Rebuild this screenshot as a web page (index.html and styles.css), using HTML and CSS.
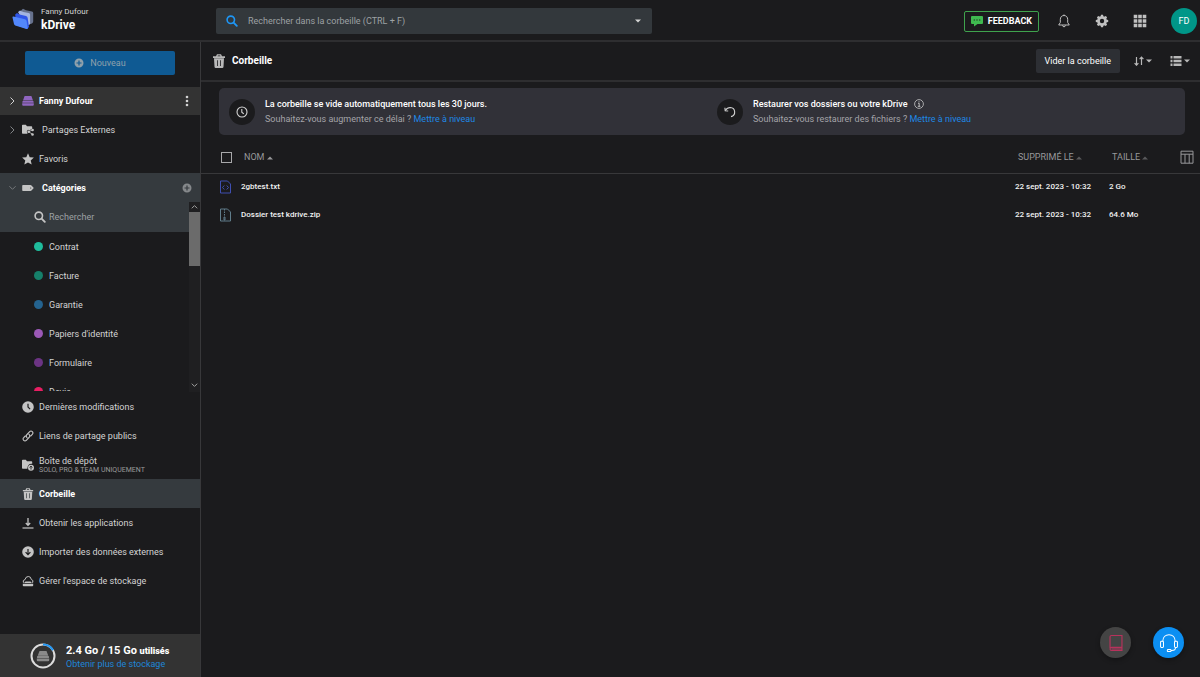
FILE: index.html
```
<!DOCTYPE html>
<html lang="fr">
<head>
<meta charset="utf-8">
<title>kDrive – Corbeille</title>
<link rel="stylesheet" href="styles.css">
</head>
<body>
<svg class="defs" width="0" height="0" aria-hidden="true">
  <symbol id="trash" viewBox="0 0 12 14"><path fill="currentColor" fill-rule="evenodd" d="M4 .3h4l1 1.900h3v1.700H0V2.200h3zM4.900 1.400l-.4.800h3l-.4-.8zM1 4.300h10l-.5 8.500q-.1 1.200-1.200 1.200H2.700q-1.100 0-1.200-1.200zM4 6.200v5.800h.8V6.200zm3.200 0v5.800h.8V6.200z"/></symbol>
  <symbol id="search" viewBox="0 0 12 12"><circle cx="4.800" cy="4.800" r="3.700" fill="none" stroke="currentColor" stroke-width="1.600"/><path d="m7.600 7.600 3.200 3.200" stroke="currentColor" stroke-width="1.900" stroke-linecap="round"/></symbol>
  <symbol id="plus" viewBox="0 0 10 10"><path fill="currentColor" fill-rule="evenodd" d="M5 .5a4.500 4.500 0 1 1 0 9 4.500 4.500 0 0 1 0-9zM4.400 2.500v1.900H2.500v1.200h1.900v1.900h1.200V5.600h1.900V4.400H5.600V2.500z"/></symbol>
  <symbol id="caret" viewBox="0 0 6 4"><path fill="currentColor" d="M0 .5h6L3 3.500z"/></symbol>
  <symbol id="drive" viewBox="0 0 12 10"><path fill="currentColor" d="M2.600 0h6.800l1.600 4.500H1zM.6 4.900h10.800l.3 1.900H.3zM.2 7.200h11.600v1.600q0 1-1 1H1.200q-1 0-1-1z"/></symbol>
  <symbol id="clock" viewBox="0 0 14 14"><circle cx="7" cy="7" r="5" fill="none" stroke="currentColor" stroke-width="1.100"/><path d="M6.800 4v3.200l2 1.700" fill="none" stroke="currentColor" stroke-width="1.100"/></symbol>
</svg>

<header class="topbar">
  <div class="brand">
    <svg class="logo" viewBox="0 0 22 22"><path fill="#66718c" d="M9 2.500 11 .8l3 1.500 6 1.300q1.200.3 1.200 1.500v8.500q0 1.200-1.200 1.800L15 17z"/><path fill="#a3b4e0" d="M6 4 8 2.600l3.300 1.300 5.500 1q1.300.3 1.300 1.600V16L14 19z"/><path fill="#2f55e8" d="M3.200 6.500 5 5l2.500 1.500L14 8q1.500.4 1.700 2L17 19l-2 2L4 17z"/><path fill="#5287fb" d="M1.500 8.500q-1.200-.2-1 1L2 16q.2 1 1.200 1.400L14.500 21q1.500.4 1.300-1l-1.200-7q-.2-1.300-1.600-1.700z"/></svg>
    <div class="brand-text"><span class="brand-user">Fanny Dufour</span><span class="brand-name">kDrive</span></div>
  </div>
  <form class="search" role="search">
    <svg class="i12 blue"><use href="#search"/></svg>
    <input class="search-input" type="search" aria-label="Rechercher dans la corbeille" placeholder="Rechercher dans la corbeille (CTRL + F)">
    <button class="plain" type="button" aria-label="Filtres de recherche"><svg class="caret"><use href="#caret"/></svg></button>
  </form>
  <div class="actions">
    <button class="feedback" type="button"><svg class="i12" viewBox="0 0 12 12"><path fill="#3fb950" d="M1 1h10q1 0 1 1v6q0 1-1 1H6.500L3 11.500V9H1Q0 9 0 8V2q0-1 1-1z"/><path fill="#1b1b1d" d="M2.700 4.500h1.200v1.100H2.700zm2.700 0h1.200v1.100H5.400zm2.700 0h1.200v1.100H8.100z"/></svg>FEEDBACK</button>
    <button class="plain" type="button" aria-label="Notifications"><svg class="i14" viewBox="0 0 14 14" fill="none" stroke="currentColor"><path d="M7 .5v1M7 1.500c2.300 0 3.700 1.700 3.700 4v3l1.600 2.500H1.700L3.300 8.500v-3c0-2.300 1.400-4 3.700-4zM5.500 11.300q.2 1.500 1.500 1.500t1.500-1.500"/></svg></button>
    <button class="plain" type="button" aria-label="Paramètres"><svg class="i14" viewBox="0 0 14 14"><g fill="currentColor"><path id="tooth" d="M5.400 3 6 .8h2L8.600 3v8L8 13.200H6L5.400 11z"/><use href="#tooth" transform="rotate(45 7 7)"/><use href="#tooth" transform="rotate(90 7 7)"/><use href="#tooth" transform="rotate(135 7 7)"/><circle cx="7" cy="7" r="4.800"/></g><circle cx="7" cy="7" r="2.200" fill="#1b1b1d"/></svg></button>
    <button class="plain" type="button" aria-label="Applications"><svg class="i14" viewBox="0 0 14 14"><path fill="currentColor" d="M.7.7h3.600v3.600H.7zm4.500 0h3.600v3.600H5.200zm4.500 0h3.600v3.600H9.700zM.7 5.200h3.600v3.600H.7zm4.500 0h3.600v3.600H5.200zm4.500 0h3.600v3.600H9.700zM.7 9.700h3.600v3.600H.7zm4.500 0h3.600v3.600H5.200zm4.500 0h3.600v3.600H9.700z"/></svg></button>
    <button class="avatar" type="button">FD</button>
  </div>
</header>

<div class="layout">
  <aside class="sidebar">
    <button class="new" type="button"><svg class="i10"><use href="#plus"/></svg>Nouveau</button>
    <nav class="nav">
      <div class="row drive">
        <svg class="chev" viewBox="0 0 6 8"><path d="m1 .5 3.500 3.500L1 7.500"/></svg>
        <svg class="i12 purple"><use href="#drive"/></svg>
        <a class="link strong" href="#">Fanny Dufour</a>
        <button class="plain end" type="button" aria-label="Options"><svg class="dots" viewBox="0 0 4 12" fill="currentColor"><circle cx="2" cy="2" r="1.300"/><circle cx="2" cy="6" r="1.300"/><circle cx="2" cy="10" r="1.300"/></svg></button>
      </div>
      <div class="row">
        <svg class="chev dim" viewBox="0 0 6 8"><path d="m1 .5 3.500 3.500L1 7.500"/></svg>
        <svg class="i12" viewBox="0 0 12 12"><path fill="currentColor" d="M0 1.500Q0 .8.800.8h3l1.200 1.500h4.400q.8 0 .8.700v1.800L7.500 6.300 6 5.800 4.800 7.200 5.500 9.800H.8Q0 9.800 0 9z"/><path d="m10.500 6-4 1.700 4 2.500" fill="none" stroke="currentColor" stroke-width=".8"/><g fill="currentColor"><circle cx="10.600" cy="6" r="1.300"/><circle cx="6.700" cy="7.800" r="1.300"/><circle cx="10.500" cy="10.500" r="1.300"/></g></svg>
        <a class="link indent" href="#">Partages Externes</a>
      </div>
      <div class="row">
        <span class="chev"></span>
        <svg class="i12" viewBox="0 0 12 12"><path fill="currentColor" d="m6 .3 1.700 3.900 4.200.4-3.200 2.800 1 4.200L6 9.400l-3.700 2.200 1-4.200L.1 4.600l4.200-.4z"/></svg>
        <a class="link" href="#">Favoris</a>
      </div>
      <div class="row on">
        <svg class="chev dim" viewBox="0 0 8 6"><path d="M.5 1 4 4.500 7.500 1"/></svg>
        <svg class="i12 white" viewBox="0 0 12 12"><path fill="currentColor" fill-rule="evenodd" d="M1 3h7.500q.6 0 1 .4L11.800 6 9.500 8.600q-.4.400-1 .4H1Q.2 9 .2 8.200V3.800Q.2 3 1 3zm7.700 2.400a.6.600 0 1 0 0 1.200.6.600 0 0 0 0-1.200z"/></svg>
        <a class="link indent strong" href="#">Catégories</a>
        <button class="plain end muted" type="button" aria-label="Ajouter une catégorie"><svg class="i10"><use href="#plus"/></svg></button>
      </div>
      <div class="scroller">
        <div class="categories">
          <label class="category finder"><svg class="i12"><use href="#search"/></svg><input class="finder-input" type="text" placeholder="Rechercher"></label>
          <a class="category" href="#"><span class="dot teal"></span>Contrat</a>
          <a class="category" href="#"><span class="dot green"></span>Facture</a>
          <a class="category" href="#"><span class="dot navy"></span>Garantie</a>
          <a class="category" href="#"><span class="dot violet"></span>Papiers d'identité</a>
          <a class="category" href="#"><span class="dot plum"></span>Formulaire</a>
          <a class="category" href="#"><span class="dot pink"></span>Devis</a>
        </div>
        <div class="track" aria-hidden="true">
          <svg class="arrow" viewBox="0 0 11 10"><path d="M2.800 6.300 5.500 3.600l2.700 2.700"/></svg>
          <span class="thumb"></span>
          <svg class="arrow last" viewBox="0 0 11 10"><path d="m2.800 3.700 2.700 2.700 2.700-2.700"/></svg>
        </div>
      </div>
      <div class="row">
        <span class="chev"></span>
        <svg class="i12" viewBox="0 0 12 12"><path fill="currentColor" fill-rule="evenodd" d="M6 .2a5.800 5.800 0 1 1 0 11.600A5.800 5.800 0 0 1 6 .2zM5.400 2.800v3.500l2.300 2.200.8-.8-1.900-1.900v-3z"/></svg>
        <a class="link" href="#">Dernières modifications</a>
      </div>
      <div class="row">
        <span class="chev"></span>
        <svg class="i12" viewBox="0 0 12 12" fill="none" stroke="currentColor" stroke-width="1.100" stroke-linecap="round"><path d="M5 7.600q-1.500-1.600 0-3.100l2.700-2.800q1.300-1.300 2.600 0t0 2.600L8.700 6M7 4.400q1.500 1.600 0 3.100l-2.700 2.800q-1.300 1.300-2.600 0t0-2.600L3.300 6"/></svg>
        <a class="link" href="#">Liens de partage publics</a>
      </div>
      <div class="row">
        <span class="chev"></span>
        <svg class="i12" viewBox="0 0 12 12"><path fill="currentColor" d="M0 1.500Q0 .8.800.8h3l1.200 1.500h4.400q.8 0 .8.700v1.800q-4.400-.6-4.900 5H.8Q0 9.800 0 9z"/><circle cx="9" cy="8.800" r="3" fill="currentColor"/><path d="M9 10.600V7.200M7.700 8.500 9 7.100l1.300 1.400" stroke="#1b1b1d" stroke-width=".9" fill="none"/></svg>
        <a class="link" href="#">Boîte de dépôt<small class="hint">SOLO, PRO &amp; TEAM UNIQUEMENT</small></a>
      </div>
      <div class="row on">
        <span class="chev"></span>
        <svg class="i12"><use href="#trash"/></svg>
        <a class="link strong" href="#">Corbeille</a>
      </div>
      <div class="row">
        <span class="chev"></span>
        <svg class="i12" viewBox="0 0 12 12" fill="none" stroke="currentColor"><path d="M6 1v7M3.800 6 6 8.300 8.200 6" stroke-width="1.300"/><path d="M.5 11h11" stroke-width="1.200"/></svg>
        <a class="link" href="#">Obtenir les applications</a>
      </div>
      <div class="row">
        <span class="chev"></span>
        <svg class="i12" viewBox="0 0 12 12"><circle cx="6" cy="6" r="5.800" fill="currentColor"/><path d="M6 3v5.500M3.600 6.200 6 8.600l2.400-2.400" fill="none" stroke="#1b1b1d" stroke-width="1.200"/></svg>
        <a class="link" href="#">Importer des données externes</a>
      </div>
      <div class="row">
        <span class="chev"></span>
        <svg class="i12" viewBox="0 0 12 12"><path d="M2 7.300H1.300Q.6 5 3 4.600 3.600 1.500 6.300 1.500T9.300 4.500Q11.600 5 10.800 7.300H10" fill="none" stroke="currentColor"/><path fill="currentColor" d="M3.500 6.500h5l1.500 1.500H2zM.8 8.800h10.400v1.600q0 .8-.8.800H1.600q-.8 0-.8-.8z"/></svg>
        <a class="link" href="#">Gérer l'espace de stockage</a>
      </div>
    </nav>
    <div class="storage">
      <svg class="gauge" viewBox="0 0 26 26"><circle cx="13" cy="13" r="11.500" fill="none" stroke="#dcdcdc" stroke-width="2"/><path d="M13 1.500A11.500 11.500 0 0 1 23 7.300" fill="none" stroke="#2196f3" stroke-width="2"/><path fill="#8a8a8a" d="M9.500 8h7l1.800 4.700H7.700zM7.200 13.100h11.600l.2 2H7zM6.800 15.500h12.400v1.700q0 1-1 1H7.800q-1 0-1-1z"/></svg>
      <div class="storage-text"><span class="usage">2.4 Go / 15 Go <b class="used">utilisés</b></span><a class="storage-link" href="#">Obtenir plus de stockage</a></div>
    </div>
  </aside>

  <main class="main">
    <div class="toolbar">
      <svg class="i14"><use href="#trash"/></svg>
      <h1 class="title">Corbeille</h1>
      <button class="empty" type="button">Vider la corbeille</button>
      <button class="plain sort" type="button" aria-label="Trier"><svg class="i10" viewBox="0 0 10 10" fill="none" stroke="currentColor"><path stroke-width="1.200" d="M2.500 1v8M.6 7.200l1.900 2 1.900-2M7.500 9V1M5.600 3.100l1.900-2 1.900 2"/></svg><svg class="caret"><use href="#caret"/></svg></button>
      <button class="plain view" type="button" aria-label="Affichage"><svg class="i12" viewBox="0 0 12 12"><path fill="currentColor" d="M.5 1h2v2.400h-2zm3 0h8v2.400h-8zm-3 3.800h2v2.400h-2zm3 0h8v2.400h-8zm-3 3.800h2V11h-2zm3 0h8V11h-8z"/></svg><svg class="caret"><use href="#caret"/></svg></button>
    </div>

    <section class="notice">
      <div class="tip">
        <span class="badge"><svg class="i14"><use href="#clock"/></svg></span>
        <div><strong class="tip-title">La corbeille se vide automatiquement tous les 30 jours.</strong><p class="tip-text">Souhaitez-vous augmenter ce délai ? <a class="upgrade" href="#">Mettre à niveau</a></p></div>
      </div>
      <div class="tip">
        <span class="badge"><svg class="i14" viewBox="0 0 14 14" fill="none" stroke="currentColor" stroke-width="1.100"><path d="M2.300 5.500q1.900-3 5-3a4.600 4.600 0 0 1 .7 9.100"/><path d="M1.900 2.800l.3 2.900 3 .3"/></svg></span>
        <div><strong class="tip-title">Restaurer vos dossiers ou votre kDrive <svg class="i10 info" viewBox="0 0 10 10"><circle cx="5" cy="5" r="4.400" fill="none" stroke="currentColor" stroke-width=".8"/><path d="M4 4.300h1.200v3M3.800 7.300h2.600M5 2.300v1" fill="none" stroke="currentColor" stroke-width=".9"/></svg></strong><p class="tip-text">Souhaitez-vous restaurer des fichiers ? <a class="upgrade" href="#">Mettre à niveau</a></p></div>
      </div>
    </section>

    <table class="files">
      <thead>
        <tr>
          <th class="c-icon"><input class="check" type="checkbox" aria-label="Tout sélectionner"></th>
          <th class="c-name">NOM <svg class="up"><use href="#caret"/></svg></th>
          <th class="c-date">SUPPRIMÉ LE <svg class="up faint"><use href="#caret"/></svg></th>
          <th class="c-size">TAILLE <svg class="up faint"><use href="#caret"/></svg></th>
          <th class="c-cols"><button class="plain" type="button" aria-label="Colonnes"><svg class="i14" viewBox="0 0 14 14" fill="none" stroke="currentColor"><path d="M1 1.200h12v12H1zM1 4.200h12M5 4.200v9M9.200 4.200v9"/></svg></button></th>
        </tr>
      </thead>
      <tbody>
        <tr>
          <td class="c-icon"><svg class="file code" viewBox="0 0 12 14" fill="none" stroke="currentColor"><path d="M1 1h7l3 3v9H1zM4.800 5.500 3 7.500l1.800 2M7.200 5.500 9 7.500l-1.800 2"/></svg></td>
          <td class="c-name">2gbtest.txt</td><td class="c-date">22 sept. 2023 - 10:32</td><td class="c-size">2 Go</td><td class="c-cols"></td>
        </tr>
        <tr>
          <td class="c-icon"><svg class="file zip" viewBox="0 0 12 14" fill="none" stroke="currentColor"><path d="M1 1h7l3 3v9H1z"/><path stroke-dasharray="1.500 1" d="M5 1v7"/><path d="M4.500 9h1v3h-1z"/></svg></td>
          <td class="c-name">Dossier test kdrive.zip</td><td class="c-date">22 sept. 2023 - 10:32</td><td class="c-size">64.6 Mo</td><td class="c-cols"></td>
        </tr>
      </tbody>
    </table>
  </main>
</div>

<div class="floating">
  <button class="fab" type="button" aria-label="Documentation"><svg class="i16" viewBox="0 0 16 16" fill="none" stroke="currentColor"><path d="M2.700 12.500V2.500q0-1.200 1.200-1.200h9.400v13.400H4q-1.300 0-1.300-1.400T4 11.900h9.300M4 13.300h9.300"/></svg></button>
  <button class="fab help" type="button" aria-label="Assistance"><svg class="i16" viewBox="0 0 16 16" fill="none" stroke="currentColor" stroke-width=".9"><path d="M2.500 6.500C2.500 2.800 5 .6 8 .6s5.500 2.200 5.500 5.900"/><rect x=".5" y="6.500" width="2.600" height="5.500" rx=".8"/><rect x="12.900" y="6.500" width="2.600" height="5.500" rx=".8"/><path d="M13.800 12q0 2.700-3.300 2.700H9.800"/><rect x="6.500" y="13.700" width="3.300" height="1.900" rx=".8"/></svg></button>
</div>
</body>
</html>
```
FILE: styles.css
```
* { box-sizing: border-box; }
body {
  margin: 0;
  min-height: 100vh;
  display: flex;
  flex-direction: column;
  background: #1b1b1d;
  color: #d4d4d4;
  font: 9px/12px Roboto, "Liberation Sans", sans-serif;
}
.defs { position: absolute; }
svg { display: block; flex: none; }
a { color: inherit; text-decoration: none; }
button, input { font: inherit; color: inherit; }
button { border: 0; padding: 0; cursor: pointer; }
.plain { background: none; display: flex; align-items: center; gap: 2px; }
.i10 { width: 10px; height: 10px; }
.i12 { width: 12px; height: 12px; }
.i14 { width: 14px; height: 14px; }
.i16 { width: 18px; height: 18px; }
.caret { width: 6px; height: 4px; }
.blue { color: #1e96f5; }
.purple { color: #9066c0; }
.white { color: #f0f0f0; }
.muted { color: #85888b; }

.topbar {
  display: flex;
  align-items: center;
  height: 42px;
  padding-top: 2px;
  border-bottom: 2px solid #2e2e30;
}
.brand { flex: none; width: 216px; display: flex; align-items: center; gap: 7px; padding: 0 0 4px 12px; }
.logo { width: 22px; height: 22px; }
.brand-text { display: flex; flex-direction: column; }
.brand-user { font-size: 8px; line-height: 12px; }
.brand-name { font-size: 12px; line-height: 15px; font-weight: 700; color: #fff; }
.search {
  flex: 0 1 436px;
  height: 26px;
  display: flex;
  align-items: center;
  gap: 10px;
  padding: 0 11px 0 10px;
  border-radius: 2px;
  background: #33383c;
}
.search-input { flex: 1; min-width: 0; padding: 0; border: 0; outline: 0; background: none; }
.search-input::placeholder, .finder-input::placeholder { color: #9da1a4; opacity: 1; }
.actions { margin-left: auto; display: flex; align-items: center; gap: 24px; padding-right: 3px; color: #c0c0c0; }
.feedback {
  height: 21px;
  display: flex;
  align-items: center;
  gap: 5px;
  padding: 0 6px;
  margin-right: -6px;
  border: 1px solid #3fa34d;
  border-radius: 2px;
  background: none;
  color: #fff;
  font-weight: 700;
}
.avatar { width: 26px; height: 26px; border-radius: 50%; background: #009688; color: #fff; }

.layout { flex: 1; display: flex; }
.sidebar { flex: none; width: 201px; display: flex; flex-direction: column; border-right: 1px solid #38383a; }
.new {
  display: flex;
  align-items: center;
  justify-content: center;
  gap: 6px;
  height: 24px;
  margin: 9px 25px 12px;
  border-radius: 2px;
  background: #0f5a93;
  color: #8fa0ab;
}
.row { display: flex; align-items: center; height: 29px; padding: 0 8px 0 9px; }
.row.drive { height: 28px; background: #333; }
.row.on { background: #353a3e; color: #f0f0f0; }
.row > svg { color: #c4c4c4; }
.row > .purple { height: 10px; color: #9066c0; }
.chev { width: 7px; height: 8px; margin-right: 6px; fill: none; stroke: #d0d0d0; }
.chev.dim { stroke: #808386; }
.link { margin-left: 5px; line-height: 10px; }
.link.indent { margin-left: 8px; }
.strong { font-weight: 700; color: #fff; }
.hint { display: block; font-size: 7px; line-height: 8px; color: #9a9a9a; }
.end { margin-left: auto; }
.dots { width: 4px; height: 12px; margin-right: 3px; }

.scroller { display: flex; height: 190px; }
.categories { flex: 1; height: 189px; overflow: hidden; }
.category { display: flex; align-items: center; gap: 6px; height: 29px; padding-left: 34px; }
.finder { height: 30px; gap: 3px; background: #353a3e; color: #c4c4c4; }
.finder-input { width: 120px; padding: 0; border: 0; outline: 0; background: none; }
.dot { width: 9px; height: 9px; border-radius: 50%; }
.teal { background: #1fbc9c; }
.green { background: #16806a; }
.navy { background: #24638f; }
.violet { background: #9b59b6; }
.plum { background: #6c3483; }
.pink { background: #e91e63; }
.track { width: 11px; display: flex; flex-direction: column; padding-bottom: 2px; background: #1f1f21; }
.arrow { width: 11px; height: 10px; fill: none; stroke: #a0a0a0; }
.arrow.last { margin-top: auto; }
.thumb { height: 54px; background: #6b6b6b; }

.storage {
  margin-top: auto;
  height: 43px;
  display: flex;
  align-items: center;
  gap: 10px;
  padding-left: 30px;
  background: #333;
}
.gauge { width: 26px; height: 26px; }
.storage-text { display: flex; flex-direction: column; padding-top: 3px; }
.usage { font-size: 11px; line-height: 13px; font-weight: 700; color: #fff; }
.used { font-size: 9px; }
.storage-link { color: #1e86d8; }

.main { flex: 1; min-width: 0; }
.toolbar { display: flex; align-items: center; height: 40px; padding: 0 10px 0 11px; border-bottom: 2px solid #2e2e30; color: #b8b8b8; }
.title { flex: 1; margin: 0 0 0 6px; font-size: 10px; font-weight: 700; color: #fff; }
.empty { height: 24px; padding: 0 9px; border-radius: 2px; background: #2d2f34; color: #fff; }
.sort { margin-left: 14px; }
.view { margin-left: 18px; }

.notice {
  display: grid;
  grid-template-columns: 1fr 1fr;
  gap: 30px;
  align-items: center;
  height: 47px;
  margin: 6px 15px 0 18px;
  padding: 0 10px;
  border-radius: 5px;
  background: #313138;
}
.tip { display: flex; align-items: center; gap: 10px; }
.badge { flex: none; width: 26px; height: 26px; display: grid; place-items: center; border-radius: 50%; background: #1b1b1d; }
.tip-title { display: flex; align-items: center; gap: 6px; line-height: 15px; font-weight: 500; color: #fff; }
.info { color: #c8c8c8; }
.tip-text { margin: 0; line-height: 15px; color: #a4a4a8; }
.upgrade { color: #1e88e5; }

.files { width: 100%; border-collapse: collapse; table-layout: fixed; margin-top: 7px; }
th, td { height: 28px; padding: 0; text-align: left; white-space: nowrap; vertical-align: middle; }
th { height: 31px; font-weight: 400; color: #98989a; }
thead tr { border-bottom: 1px solid #38383a; }
td { font-size: 8px; font-weight: 500; color: #f2f2f2; }
.c-icon { width: 40px; padding-left: 18px; }
.c-date { width: 94px; }
.c-size { width: 71px; }
.c-cols { width: 20px; }
th.c-name, th.c-date, th.c-size { padding-left: 3px; }
.check { display: block; appearance: none; width: 11px; height: 11px; margin: 0 0 0 2px; border: 1px solid #a8a8aa; }
.up { display: inline-block; width: 6px; height: 4px; transform: rotate(180deg); vertical-align: middle; }
.faint { opacity: .5; }
.file { width: 13px; height: 14px; }
.code { color: #3f4fb0; }
.zip { color: #607d8b; }

.floating { position: fixed; right: 16px; bottom: 19px; display: flex; gap: 22px; }
.fab { width: 31px; height: 31px; display: grid; place-items: center; border-radius: 50%; background: #444; color: #b8325c; box-shadow: 0 2px 5px rgba(0, 0, 0, .3); }
.help { background: #0c8ff2; color: #fff; }
```
